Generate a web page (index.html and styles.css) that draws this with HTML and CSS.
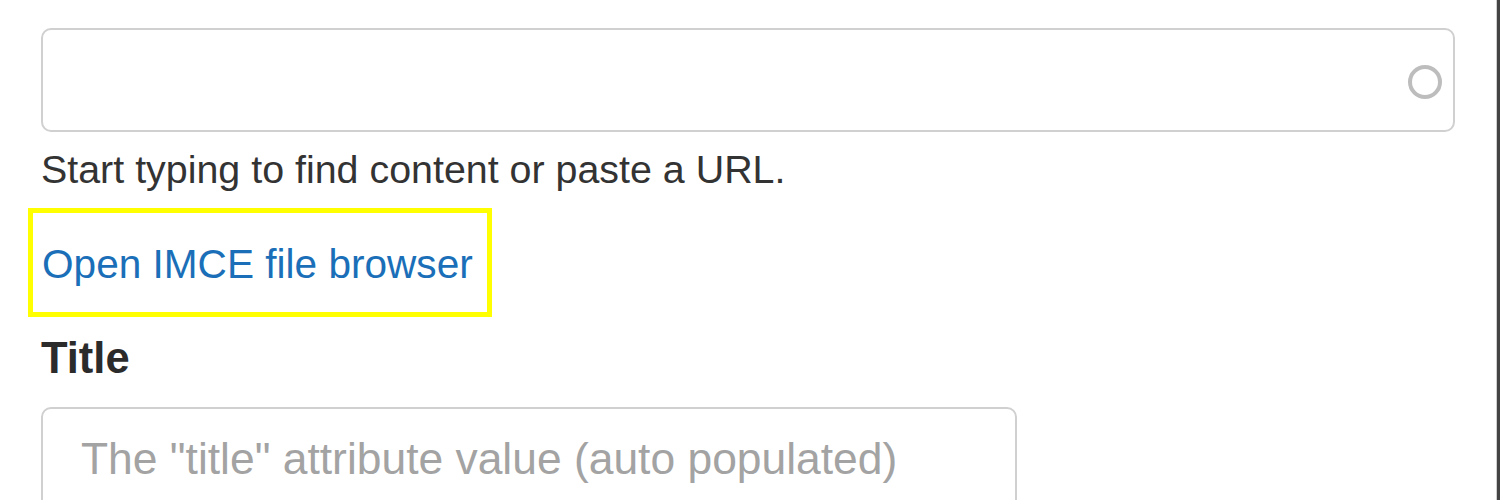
FILE: index.html
```html
<!DOCTYPE html>
<html lang="en">
<head>
<meta charset="utf-8">
<title>Link dialog</title>
<link rel="stylesheet" href="styles.css">
</head>
<body>
<div class="page">
  <main class="form">
    <div class="input url-input">
      <svg class="throbber" width="36" height="36" viewBox="0 0 36 36" aria-hidden="true">
        <circle cx="18" cy="18" r="15" fill="none" stroke="#bdbdbd" stroke-width="4"/>
      </svg>
    </div>
    <div class="help">Start typing to find content or paste a URL.</div>
    <div class="highlight">
      <a class="link" href="#">Open IMCE file browser</a>
    </div>
    <label class="label">Title</label>
    <div class="input title-input">
      <span class="placeholder">The "title" attribute value (auto populated)</span>
    </div>
  </main>
  <div class="edge"></div>
</div>
</body>
</html>
```

FILE: styles.css
```css
html, body {
  margin: 0;
  padding: 0;
  background: #ffffff;
}
body {
  width: 1500px;
  height: 500px;
  overflow: hidden;
  font-family: "Liberation Sans", Arial, Helvetica, sans-serif;
}
.page {
  display: flex;
  height: 500px;
}
.form {
  flex: 1;
  display: flex;
  flex-direction: column;
  align-items: flex-start;
  padding: 28px 0 0 41px;
  overflow: hidden;
}
.form > * {
  flex-shrink: 0;
}
.input {
  box-sizing: border-box;
  border: 2px solid #d0d0d0;
  border-radius: 10px;
  background: #fff;
}
.url-input {
  width: 1414px;
  height: 104px;
  display: flex;
  align-items: center;
  justify-content: flex-end;
  padding: 4px 10px 0 0;
}
.throbber {
  display: block;
}
.help {
  margin-top: 14px;
  font-size: 39.4px;
  line-height: 1.2;
  color: #333333;
}
.highlight {
  margin: 15px 0 0 -13px;
  border: 5px solid #ffff00;
  padding: 27px 14px 24px 9px;
}
.link {
  display: block;
  font-size: 40.6px;
  line-height: 48px;
  color: #1a6fb8;
  text-decoration: none;
}
.label {
  margin-top: 15px;
  font-size: 43.5px;
  font-weight: bold;
  line-height: 1.2;
  color: #2b2b2b;
}
.title-input {
  margin-top: 23px;
  width: 976px;
  height: 120px;
  padding: 23px 0 0 38px;
}
.placeholder {
  display: block;
  font-size: 44.4px;
  line-height: 1.2;
  color: #a3a3a3;
}
.edge {
  width: 3px;
  flex: none;
  background: #444444;
  border-left: 1px solid #cfcfcf;
}
```
